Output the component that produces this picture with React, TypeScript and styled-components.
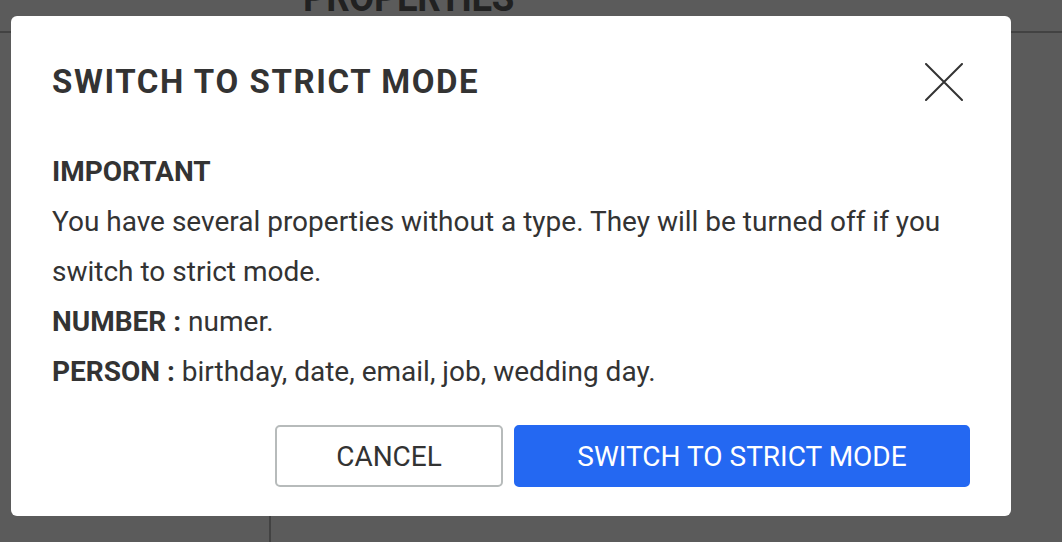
import styled, { createGlobalStyle } from 'styled-components';

const GlobalStyle = createGlobalStyle`
  html, body {
    margin: 0;
    padding: 0;
    width: 100%;
    height: 100%;
    overflow: hidden;
    background: #ffffff;
    font-family: Roboto, 'Liberation Sans', Arial, sans-serif;
  }
  #root {
    height: 100%;
  }
`;

const StyledPage = styled.div`
  display: flex;
  flex-direction: column;
  height: 100%;
  background: #ffffff;
`;

const StyledPageHeader = styled.header`
  height: 31px;
  flex-shrink: 0;
  border-bottom: 2px solid #b8b8b8;
  padding-left: 303px;
  overflow: hidden;
`;

const StyledPageTitle = styled.h1`
  margin: -22px 0 0;
  font-size: 40px;
  line-height: 40px;
  font-weight: 700;
  letter-spacing: -0.5px;
  color: #5e5e5e;
  transform: scaleX(0.915);
  transform-origin: left;
`;

const StyledPageBody = styled.div`
  flex: 1;
  display: flex;
`;

const StyledSidebar = styled.aside`
  width: 269px;
  border-right: 2px solid #b8b8b8;
`;

const StyledOverlay = styled.div`
  position: fixed;
  inset: 0;
  background: rgba(0, 0, 0, 0.645);
  padding: 16px 0 0 11px;
`;

const StyledDialog = styled.div`
  width: 1000px;
  height: 500px;
  box-sizing: border-box;
  background: #ffffff;
  border-radius: 6px;
  padding: 48px 41px 29px;
  display: flex;
  flex-direction: column;
  color: #333333;
`;

const StyledDialogHeader = styled.div`
  display: flex;
  align-items: center;
  justify-content: space-between;
  height: 36px;
`;

const StyledDialogTitle = styled.h2`
  margin: 0;
  font-size: 33px;
  line-height: 36px;
  font-weight: 700;
  letter-spacing: 1.6px;
  color: #333333;
`;

const StyledCloseButton = styled.button`
  width: 40px;
  height: 40px;
  margin-right: 6px;
  padding: 0;
  border: none;
  background: none;
  display: flex;
  align-items: center;
  justify-content: center;
  cursor: pointer;
`;

const StyledDialogBody = styled.div`
  margin-top: 47px;
  font-size: 28px;
  line-height: 50px;
  color: #333333;
`;

const StyledParagraph = styled.p`
  margin: 0;
`;

const StyledStrong = styled.strong`
  font-weight: 700;
`;

const StyledActions = styled.div`
  margin-top: auto;
  display: flex;
  justify-content: flex-end;
  gap: 11px;
`;

const StyledActionButton = styled.button<{ $primary?: boolean }>`
  height: 62px;
  width: ${(p) => (p.$primary ? '456px' : '228px')};
  box-sizing: border-box;
  border-radius: 5px;
  border: 2px solid ${(p) => (p.$primary ? '#2468f2' : '#b7bbbb')};
  background: ${(p) => (p.$primary ? '#2468f2' : '#ffffff')};
  color: ${(p) => (p.$primary ? '#ffffff' : '#333333')};
  font-family: Roboto, 'Liberation Sans', Arial, sans-serif;
  font-size: 28px;
  font-weight: 400;
  cursor: pointer;
`;

const CloseIcon = () => (
  <svg width='38' height='38' viewBox='0 0 38 38'>
    <path d='M1 1 L37 37 M37 1 L1 37' stroke='#333333' strokeWidth='2' strokeLinecap='round' />
  </svg>
);

const App = () => {
  return (
    <>
      <GlobalStyle />
      <StyledPage>
        <StyledPageHeader>
          <StyledPageTitle>PROPERTIES</StyledPageTitle>
        </StyledPageHeader>
        <StyledPageBody>
          <StyledSidebar />
        </StyledPageBody>
      </StyledPage>

      <StyledOverlay>
        <StyledDialog role='dialog'>
          <StyledDialogHeader>
            <StyledDialogTitle>SWITCH TO STRICT MODE</StyledDialogTitle>
            <StyledCloseButton aria-label='Close'>
              <CloseIcon />
            </StyledCloseButton>
          </StyledDialogHeader>

          <StyledDialogBody>
            <StyledParagraph>
              <StyledStrong>IMPORTANT</StyledStrong>
            </StyledParagraph>
            <StyledParagraph>
              You have several properties without a type. They will be turned off if you switch to strict
              mode.
            </StyledParagraph>
            <StyledParagraph>
              <StyledStrong>NUMBER :</StyledStrong> numer.
            </StyledParagraph>
            <StyledParagraph>
              <StyledStrong>PERSON :</StyledStrong> birthday, date, email, job, wedding day.
            </StyledParagraph>
          </StyledDialogBody>

          <StyledActions>
            <StyledActionButton>CANCEL</StyledActionButton>
            <StyledActionButton $primary>SWITCH TO STRICT MODE</StyledActionButton>
          </StyledActions>
        </StyledDialog>
      </StyledOverlay>
    </>
  );
};

export default App;
